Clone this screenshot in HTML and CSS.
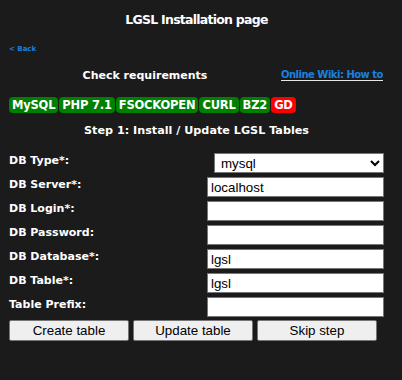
FILE: index.html
```html
<!DOCTYPE html>
<html>
<head>
<meta charset="utf-8">
<link rel="stylesheet" href="styles.css">
</head>
<body>
<div class="page">
  <h1 class="title">LGSL Installation page</h1>
  <a class="back" href="#">&lt; Back</a>
  <div class="req-head">
    <div class="req-title">Check requirements</div>
    <a class="wiki" href="#">Online Wiki: How to</a>
  </div>
  <div class="badges">
    <span class="badge ok">MySQL</span>
    <span class="badge ok">PHP 7.1</span>
    <span class="badge ok">FSOCKOPEN</span>
    <span class="badge ok">CURL</span>
    <span class="badge ok">BZ2</span>
    <span class="badge bad">GD</span>
  </div>
  <div class="step">Step 1: Install / Update LGSL Tables</div>
  <form class="form">
    <label class="lbl">DB Type*:</label>
    <div class="ctl"><select class="sel"><option>mysql</option></select></div>
    <label class="lbl">DB Server*:</label>
    <div class="ctl"><input class="inp" type="text" value="localhost"></div>
    <label class="lbl">DB Login*:</label>
    <div class="ctl"><input class="inp" type="text" value=""></div>
    <label class="lbl">DB Password:</label>
    <div class="ctl"><input class="inp" type="password" value=""></div>
    <label class="lbl">DB Database*:</label>
    <div class="ctl"><input class="inp" type="text" value="lgsl"></div>
    <label class="lbl">DB Table*:</label>
    <div class="ctl"><input class="inp" type="text" value="lgsl"></div>
    <label class="lbl">Table Prefix:</label>
    <div class="ctl"><input class="inp" type="text" value=""></div>
  </form>
  <div class="buttons">
    <button class="btn" type="button">Create table</button>
    <button class="btn" type="button">Update table</button>
    <button class="btn" type="button">Skip step</button>
  </div>
</div>
</body>
</html>
```

FILE: styles.css
```css
html, body {
  margin: 0;
  padding: 0;
  background: #1b1b1b;
}
body {
  font-family: "DejaVu Sans", Verdana, sans-serif;
  color: #ffffff;
}
.page {
  width: 375px;
  padding: 0 0 0 9px;
  display: flex;
  flex-direction: column;
}
.title {
  margin: 12px 0 0 0;
  font-size: 12.5px;
  font-weight: bold;
  text-align: center;
  line-height: 16px;
  letter-spacing: -0.75px;
}
.back {
  margin-top: 17px;
  font-size: 7px;
  font-weight: bold;
  color: #1a80e0;
  text-decoration: none;
  line-height: 9px;
  align-self: flex-start;
}
.req-head {
  display: flex;
  margin-top: 15px;
  align-items: baseline;
}
.req-title {
  width: 272px;
  flex-shrink: 0;
  text-align: center;
  font-size: 11px;
  font-weight: bold;
  line-height: 14px;
}
.wiki {
  flex-shrink: 0;
  white-space: nowrap;
  font-size: 10px;
  font-weight: bold;
  color: #1a80e0;
  text-decoration: underline;
  text-decoration-color: #e8e8e8;
  text-underline-offset: 2px;
  line-height: 14px;
  letter-spacing: -0.5px;
  position: relative;
  top: -1px;
}
.badges {
  display: flex;
  gap: 1px;
  margin-top: 14px;
}
.badge {
  font-size: 11.5px;
  font-weight: bold;
  line-height: 16px;
  padding: 0 3px;
  border-radius: 4px;
  color: #ffffff;
  letter-spacing: -0.2px;
}
.ok { background: #008000; }
.bad { background: #ff0000; }
.step {
  margin-top: 11px;
  text-align: center;
  font-size: 11.2px;
  font-weight: bold;
  line-height: 14px;
}
.form {
  margin: 15px 0 0 0;
  display: grid;
  grid-template-columns: 1fr auto;
  row-gap: 4px;
}
.lbl {
  font-size: 11px;
  font-weight: bold;
  line-height: 14px;
  padding-top: 1px;
}
.ctl {
  display: flex;
  justify-content: flex-end;
}
.sel {
  width: 170px;
  height: 20px;
  font-family: "Liberation Sans", Arial, sans-serif;
  font-size: 13.33px;
  background: #ffffff;
  color: #000000;
  border: 1px solid #767676;
  border-radius: 0;
  padding: 0 0 0 2px;
  margin: 0;
  box-sizing: border-box;
}
.inp {
  width: 177px;
  height: 20px;
  font-family: "Liberation Sans", Arial, sans-serif;
  font-size: 13.33px;
  background: #ffffff;
  color: #000000;
  border: 1px solid #767676;
  border-radius: 0;
  padding: 1px 3px;
  margin: 0;
  box-sizing: border-box;
}
.buttons {
  display: flex;
  gap: 4px;
  margin-top: 3px;
}
.btn {
  width: 120px;
  height: 21px;
  font-family: "Liberation Sans", Arial, sans-serif;
  font-size: 13.33px;
  background: #efefef;
  color: #000000;
  border: 1px solid #767676;
  border-radius: 2px;
  padding: 0;
  margin: 0;
}
```
